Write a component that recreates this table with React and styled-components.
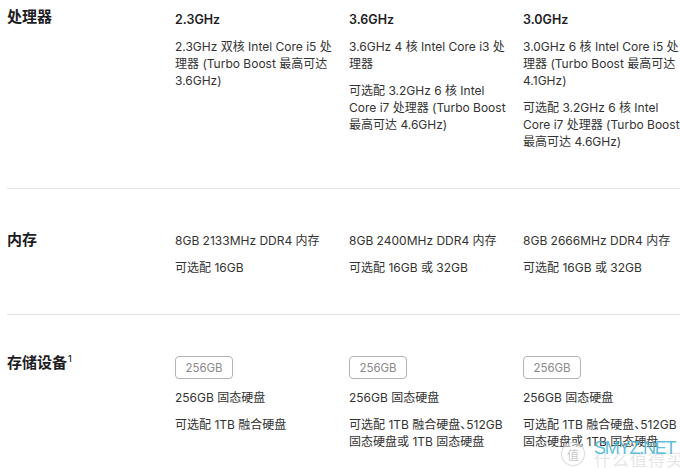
import React from 'react';
import styled, { createGlobalStyle } from 'styled-components';

const GlobalStyle = createGlobalStyle`
  body {
    margin: 0;
    background: #fff;
    font-family: Inter, "Noto Sans CJK SC", sans-serif;
    color: #1d1d1f;
    -webkit-font-smoothing: antialiased;
  }
`;

const specs = [
  {
    label: '处理器',
    top: 7,
    columns: [
      {
        heading: '2.3GHz',
        paragraphs: [['2.3GHz 双核 Intel Core i5 处', '理器 (Turbo Boost 最高可达', '3.6GHz)']],
      },
      {
        heading: '3.6GHz',
        paragraphs: [
          ['3.6GHz 4 核 Intel Core i3 处', '理器'],
          ['可选配 3.2GHz 6 核 Intel', 'Core i7 处理器 (Turbo Boost', '最高可达 4.6GHz)'],
        ],
      },
      {
        heading: '3.0GHz',
        paragraphs: [
          ['3.0GHz 6 核 Intel Core i5 处', '理器 (Turbo Boost 最高可达', '4.1GHz)'],
          ['可选配 3.2GHz 6 核 Intel', 'Core i7 处理器 (Turbo Boost', '最高可达 4.6GHz)'],
        ],
      },
    ],
  },
  {
    label: '内存',
    top: 41,
    columns: [
      { paragraphs: [['8GB 2133MHz DDR4 内存'], ['可选配 16GB']] },
      { paragraphs: [['8GB 2400MHz DDR4 内存'], ['可选配 16GB 或 32GB']] },
      { paragraphs: [['8GB 2666MHz DDR4 内存'], ['可选配 16GB 或 32GB']] },
    ],
  },
  {
    label: '存储设备',
    note: '1',
    top: 38,
    columns: [
      { chip: '256GB', paragraphs: [['256GB 固态硬盘'], ['可选配 1TB 融合硬盘']] },
      { chip: '256GB', paragraphs: [['256GB 固态硬盘'], ['可选配 1TB 融合硬盘、512GB', '固态硬盘或 1TB 固态硬盘']] },
      { chip: '256GB', paragraphs: [['256GB 固态硬盘'], ['可选配 1TB 融合硬盘、512GB', '固态硬盘或 1TB 固态硬盘']] },
    ],
  },
];

// the ideographic comma is full width in Noto CJK; tuck it in like the original
const renderLine = (line) =>
  line.split('、').flatMap((part, i) => (i === 0 ? [part] : [<Comma key={i}>、</Comma>, part]));

export default function App() {
  return (
    <>
      <GlobalStyle />
      <Page>
        {specs.map((spec, i) => (
          <Section key={spec.label} top={spec.top} last={i === specs.length - 1}>
            <Label>
              {spec.label}
              {spec.note && <sup>{spec.note}</sup>}
            </Label>
            {spec.columns.map((col, j) => (
              <Column key={j} offset={col.heading ? 4 : col.chip ? 3 : 2}>
                {col.heading && <Heading>{col.heading}</Heading>}
                {col.chip && <Chip>{col.chip}</Chip>}
                {col.paragraphs.map((lines, k) => (
                  <Para key={k}>
                    {lines.map((line) => (
                      <Line key={line}>{renderLine(line)}</Line>
                    ))}
                  </Para>
                ))}
              </Column>
            ))}
          </Section>
        ))}
        <Watermark>
          <WmBadge>值</WmBadge>
          <WmText>
            <span className="cn">什么值得买</span>
            <span className="en">SMYZ.NET</span>
          </WmText>
        </Watermark>
      </Page>
    </>
  );
}

const Page = styled.div`
  position: relative;
  width: 680px;
  height: 468px;
  overflow: hidden;
  padding-left: 7px;
  box-sizing: border-box;
`;

const Section = styled.section`
  display: grid;
  grid-template-columns: 168px 174px 174px 1fr;
  padding: ${(p) => p.top}px 0 38px;
  border-bottom: ${(p) => (p.last ? 'none' : '1px solid #e3e3e3')};
`;

const Label = styled.div`
  font-size: 15px;
  line-height: 20px;
  font-weight: 600;
  color: #1d1d1f;

  sup {
    font-size: 9px;
    font-weight: 500;
    vertical-align: top;
    line-height: 12px;
    margin-left: 1px;
  }
`;

const Column = styled.div`
  padding-top: ${(p) => p.offset}px;
`;

const Heading = styled.div`
  font-size: 12.5px;
  line-height: 18px;
  font-weight: 600;
  color: #1d1d1f;
  margin-bottom: 9px;
`;

const Chip = styled.div`
  width: 58px;
  height: 23px;
  box-sizing: border-box;
  border: 1px solid #b3b3b3;
  border-radius: 4px;
  display: flex;
  align-items: center;
  justify-content: center;
  font-size: 11.5px;
  color: #8a8a8a;
  margin-bottom: 10px;
`;

const Para = styled.div`
  font-size: 12px;
  line-height: 17px;
  color: #333;

  & + & {
    margin-top: 10px;
  }
`;

const Line = styled.div`
  white-space: nowrap;
`;

const Comma = styled.span`
  letter-spacing: -7px;
  margin-right: 1px;
`;

const Watermark = styled.div`
  position: absolute;
  left: 561px;
  top: 437px;
  display: flex;
  align-items: flex-start;
  gap: 9px;
  pointer-events: none;
`;

const WmBadge = styled.div`
  width: 22px;
  height: 22px;
  margin-top: 5px;
  border-radius: 50%;
  border: 1.5px solid rgba(190, 190, 190, 0.55);
  color: rgba(170, 170, 170, 0.65);
  font-size: 12px;
  display: flex;
  align-items: center;
  justify-content: center;
  background: rgba(255, 255, 255, 0.5);
`;

const WmText = styled.div`
  position: relative;
  width: 86px;
  height: 31px;

  .cn {
    position: absolute;
    left: 0;
    top: 9px;
    font-size: 17px;
    letter-spacing: 1px;
    color: rgba(190, 190, 190, 0.4);
    white-space: nowrap;
  }

  .en {
    position: absolute;
    left: 0;
    top: 1px;
    font-size: 18px;
    letter-spacing: -1.2px;
    font-family: "Liberation Sans", sans-serif;
    color: rgba(70, 182, 212, 0.9);
    white-space: nowrap;
  }
`;
